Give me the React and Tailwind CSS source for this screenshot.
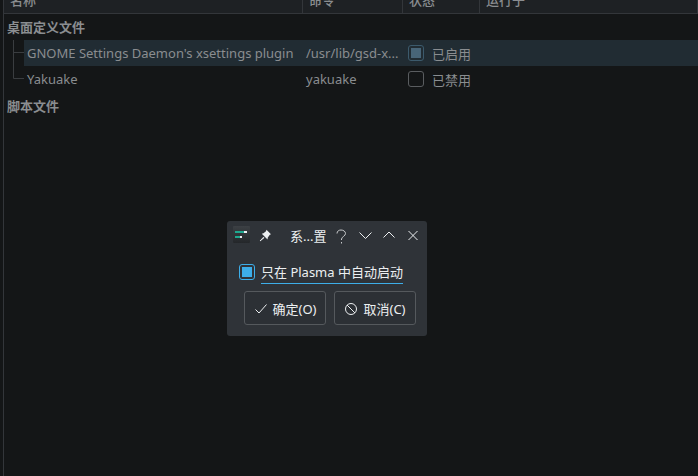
import React from "react";

function Row({ selected, name, cmd, checked, status }) {
  return (
    <div className={`h-[26px] flex items-center ${selected ? "bg-[#212c33]" : ""}`}>
      <div className="w-[279px] pl-[3px] truncate">{name}</div>
      <div className="w-[101px] pl-[3px] truncate">{cmd}</div>
      <div className="flex items-center gap-[8px] pl-[4px]">
        <div className={`w-4 h-4 rounded-[3px] border flex items-center justify-center ${checked ? "border-[#3c5a6c]" : "border-[#5a5d60]"}`}>
          {checked && <div className="w-[10px] h-[10px] bg-[#486578]" />}
        </div>
        <span className="pt-[2px]">{status}</span>
      </div>
    </div>
  );
}

export default function App() {
  return (
    <div className="relative w-[698px] h-[476px] overflow-hidden bg-[#141617] text-[13px] text-[#8a8d90] font-['Noto_Sans','Noto_Sans_CJK_SC',sans-serif] leading-[18px]">
      <div className="ml-[3px] h-full border-l border-[#33363a]">
        <div className="h-[14px] bg-[#1e2124] border-b border-[#33363a] flex items-end overflow-hidden">
          {[["名称", "w-[299px]"], ["命令", "w-[100px]"], ["状态", "w-[77px]"], ["运行于", "flex-1"]].map(([t, w]) => (
            <div key={t} className={`${w} h-[13px] relative border-r border-[#33363a] font-medium`}>
              <span className="absolute top-[-9px] left-[6px]">{t}</span>
            </div>
          ))}
        </div>
        <div className="h-[26px] flex items-center pl-[3px] font-bold">桌面定义文件</div>
        <div className="relative pl-[20px]">
          <svg className="absolute left-[5px] top-0" width="16" height="52" stroke="#3a3d40" fill="none">
            <path d="M4.5 0V38.5H15M4.5 12.5H15" />
          </svg>
          <Row selected name="GNOME Settings Daemon's xsettings plugin" cmd="/usr/lib/gsd-x..." checked status="已启用" />
          <Row name="Yakuake" cmd="yakuake" status="已禁用" />
        </div>
        <div className="h-[26px] flex items-center pl-[3px] pt-[2px] font-bold">脚本文件</div>
      </div>

      <div className="absolute left-[227px] top-[221px] w-[200px] h-[115px] rounded-[3px] bg-[#2f3338] text-[#eceff1]">
        <div className="h-[28px] flex items-center relative">
          <svg className="absolute left-[6px] top-[5px]" width="17" height="17">
            <defs>
              <linearGradient id="g" x1="0" y1="0" x2="0" y2="1">
                <stop offset="0" stopColor="#3c4044" />
                <stop offset="1" stopColor="#24272a" />
              </linearGradient>
            </defs>
            <rect width="17" height="17" rx="1" fill="url(#g)" />
            <rect x="2" y="5" width="10" height="2" fill="#1fa88f" />
            <rect x="11" y="5" width="3" height="2" fill="#eceff1" />
            <rect x="2" y="10" width="5" height="2" fill="#1fa88f" />
            <rect x="7" y="10" width="2" height="2" fill="#eceff1" />
          </svg>
          <svg className="absolute left-[32px] top-[8px]" width="13" height="13" viewBox="0 0 13 13" fill="#eceff1">
            <path d="M7.5 0.8L12 5.3L10.8 5.8L8.8 8.6L8.5 10.5L2.8 4.8L4.5 4.3L7 2.2Z" />
            <path d="M4.5 8.2L1 12L5 8.8Z" stroke="#eceff1" strokeWidth="0.8" />
          </svg>
          <span className="absolute left-[63px] top-[6px]">系...置</span>
          <svg className="absolute left-[109px] top-[8px]" width="11" height="15" fill="none" stroke="#c8cacc">
            <path d="M1 4.5C1 2 3 1 5 1C7.5 1 9.5 2.5 9.5 4.5C9.5 7 6 7.5 5.5 10V11" />
            <path d="M5.5 13V14.5" />
          </svg>
          <svg className="absolute left-[131px] top-[8px]" width="15" height="14" fill="none" stroke="#eceff1">
            <path d="M1.5 3.5L7.5 9.5L13.5 3.5" />
          </svg>
          <svg className="absolute left-[155px] top-[7px]" width="14" height="14" fill="none" stroke="#eceff1">
            <path d="M1.5 9.5L7 4L12.5 9.5" />
          </svg>
          <svg className="absolute left-[180px] top-[9px]" width="12" height="12" fill="none" stroke="#eceff1">
            <path d="M1.5 1L10.5 10M10.5 1L1.5 10" />
          </svg>
        </div>
        <div className="flex items-start pl-[12px] pt-[12px] gap-[6px]">
          <div className="mt-[3px] w-4 h-4 rounded-[3px] border border-[#3daee9] flex items-center justify-center">
            <div className="w-[10px] h-[10px] bg-[#3daee9]" />
          </div>
          <span className="pt-[2px] pb-[2px] border-b border-[#3daee9] leading-[18px]">只在 Plasma 中自动启动</span>
        </div>
        <div className="flex gap-2 pl-[17px] pt-[7px]">
          <button className="w-[82px] h-[34px] pt-[1px] rounded-[3px] border border-[#55595d] bg-[#2c3035] flex items-center justify-center gap-[5px] text-[13px]">
            <svg width="14" height="14" fill="none" stroke="#eceff1"><path d="M1.5 7.5L5 11L12.5 2.5" /></svg>
            <span>确定(O)</span>
          </button>
          <button className="w-[82px] h-[34px] pt-[1px] rounded-[3px] border border-[#55595d] bg-[#2c3035] flex items-center justify-center gap-[5px] text-[13px]">
            <svg width="14" height="14" fill="none" stroke="#eceff1"><circle cx="7" cy="7" r="5.5" /><path d="M3 3L11 11" /></svg>
            <span>取消(C)</span>
          </button>
        </div>
      </div>
    </div>
  );
}
